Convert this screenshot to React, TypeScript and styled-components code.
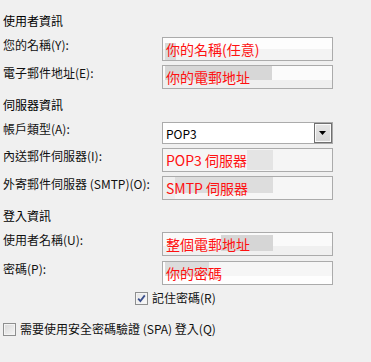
import React from "react";
import styled, { createGlobalStyle } from "styled-components";

const Global = createGlobalStyle`
  html, body { margin: 0; padding: 0; background: #f0f0f0; }
  body { font-family: "Noto Sans CJK TC", "Noto Sans", sans-serif; }
`;

type Patch = { x: number; y: number; w: number; h: number; c: string };

const bgImage = (p: Patch[]) =>
  p.map((q) => `linear-gradient(${q.c}, ${q.c})`).join(", ") || "none";
const bgPos = (p: Patch[]) => p.map((q) => `${q.x}px ${q.y}px`).join(", ") || "0 0";
const bgSize = (p: Patch[]) => p.map((q) => `${q.w}px ${q.h}px`).join(", ") || "auto";

const Page = styled.div`
  width: 371px;
  height: 362px;
  padding: 5px 0 0 3px;
  box-sizing: border-box;
  display: flex;
  flex-direction: column;
  color: #111;
  font-size: 12px;
  overflow: hidden;
`;

const Heading = styled.div`
  height: 32px;
  line-height: 32px;
  font-size: 12px;
  color: #000;
`;

const Section = styled.div`
  display: flex;
  flex-direction: column;
  gap: 4px;
`;

const Row = styled.div<{ $h: number }>`
  display: grid;
  grid-template-columns: 159px 171px;
  height: ${(p) => p.$h}px;
`;

const Label = styled.div`
  line-height: 16px;
  white-space: nowrap;
  color: #111;
`;

const Field = styled.div<{ $patches: Patch[]; $base: string }>`
  box-sizing: border-box;
  height: 100%;
  border: 1px solid #ababab;
  background-color: ${(p) => p.$base};
  background-image: ${(p) => bgImage(p.$patches)};
  background-position: ${(p) => bgPos(p.$patches)};
  background-size: ${(p) => bgSize(p.$patches)};
  background-repeat: no-repeat;
  color: #ff1010;
  font-size: 14px;
  line-height: 22px;
  padding: 0 0 0 3px;
  white-space: nowrap;
`;

const Select = styled.div`
  box-sizing: border-box;
  height: 22px;
  margin-top: 1px;
  border: 1px solid #ababab;
  background: #fff;
  display: flex;
  align-items: center;
  justify-content: space-between;
  padding: 0 0 0 3px;
  font-size: 12px;
  color: #000;
`;

const DropButton = styled.div`
  box-sizing: border-box;
  width: 18px;
  height: 20px;
  border: 1px solid #707070;
  box-shadow: inset 0 0 0 1px #fafafa;
  background: linear-gradient(#e6e6e6, #d6d6d6);
  display: flex;
  align-items: center;
  justify-content: center;
`;

const CheckRow = styled.div<{ $indent: number; $top: number }>`
  display: flex;
  align-items: center;
  gap: 4px;
  margin-left: ${(p) => p.$indent}px;
  margin-top: ${(p) => p.$top}px;
  height: 16px;
  line-height: 16px;
  color: #111;
  white-space: nowrap;
`;

const Box = styled.div<{ $checked?: boolean }>`
  box-sizing: border-box;
  width: 13px;
  height: 13px;
  border: 1px solid #8e8f8f;
  box-shadow: inset 0 0 0 1px #f4f4f4;
  background: ${(p) =>
    p.$checked
      ? "linear-gradient(135deg, #e4e4e4, #fbfbfb)"
      : "linear-gradient(135deg, #d8d8d8, #f6f6f6)"};
  display: flex;
  align-items: center;
  justify-content: center;
`;

const Check = () => (
  <svg width="9" height="9" viewBox="0 0 9 9">
    <path d="M1.2 4.6 L3.4 7 L7.8 1.4" fill="none" stroke="#3b4f8c" strokeWidth="1.8" />
  </svg>
);

const Arrow = () => (
  <svg width="8" height="5" viewBox="0 0 8 5">
    <path d="M0 0 H7 L3.5 4 Z" fill="#000" />
  </svg>
);

const P = (x: number, y: number, w: number, h: number, c: string): Patch => ({ x, y, w, h, c });

export default function App() {
  return (
    <>
      <Global />
      <Page>
        <Heading>使用者資訊</Heading>
        <Section>
          <Row $h={24}>
            <Label>您的名稱(Y):</Label>
            <Field
              $base="#fdfdfd"
              $patches={[P(2, 5, 11, 17, "#dadada"), P(0, 11, 171, 11, "#f3f3f3")]}
            >
              你的名稱(任意)
            </Field>
          </Row>
          <Row $h={24}>
            <Label>電子郵件地址(E):</Label>
            <Field
              $base="#fbfbfb"
              $patches={[P(2, 0, 107, 14, "#d7d7d7"), P(0, 14, 171, 8, "#efefef")]}
            >
              你的電郵地址
            </Field>
          </Row>
        </Section>
        <Heading>伺服器資訊</Heading>
        <Section>
          <Row $h={23}>
            <Label>帳戶類型(A):</Label>
            <Select>
              POP3
              <DropButton>
                <Arrow />
              </DropButton>
            </Select>
          </Row>
          <Row $h={24}>
            <Label>內送郵件伺服器(I):</Label>
            <Field $base="#f5f5f5" $patches={[P(84, 1, 26, 20, "#e4e4e4")]}>
              POP3 伺服器
            </Field>
          </Row>
          <Row $h={24}>
            <Label>外寄郵件伺服器 (SMTP)(O):</Label>
            <Field
              $base="#f6f6f6"
              $patches={[P(12, 0, 98, 16, "#dddddd"), P(0, 0, 12, 22, "#efefef")]}
            >
              SMTP 伺服器
            </Field>
          </Row>
        </Section>
        <Heading>登入資訊</Heading>
        <Section style={{ gap: 5 }}>
          <Row $h={24}>
            <Label>使用者名稱(U):</Label>
            <Field
              $base="#fafafa"
              $patches={[P(58, 2, 52, 16, "#d6d6d6"), P(0, 13, 171, 9, "#f0f0f0")]}
            >
              整個電郵地址
            </Field>
          </Row>
          <Row $h={23}>
            <Label>密碼(P):</Label>
            <Field
              $base="#fefefe"
              $patches={[P(2, 0, 44, 14, "#dcdcdc"), P(46, 0, 125, 14, "#f6f6f6")]}
            >
              你的密碼
            </Field>
          </Row>
        </Section>
        <CheckRow $indent={132} $top={6}>
          <Box $checked>
            <Check />
          </Box>
          記住密碼(R)
        </CheckRow>
        <CheckRow $indent={0} $top={15}>
          <Box />
          需要使用安全密碼驗證 (SPA) 登入(Q)
        </CheckRow>
      </Page>
    </>
  );
}
